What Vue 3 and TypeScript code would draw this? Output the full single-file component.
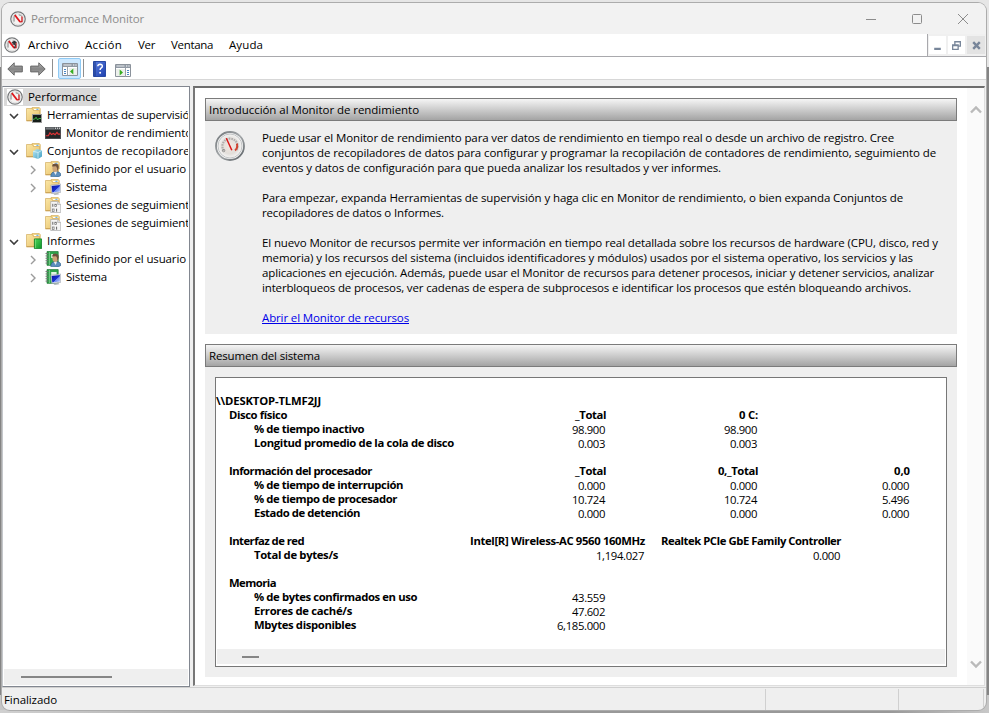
<script setup lang="ts">
interface TreeNode { label: string; width: number; level: number; icon: string; chevron?: 'open' | 'closed'; selected?: boolean }
interface Cell { text: string; width: number; bold?: boolean }
interface Row { label?: string; width?: number; indent?: number; cells?: Cell[]; wide?: boolean }
interface Line { text: string; width: number }

const applyFit = (el: HTMLElement, width: number) => {
  el.style.letterSpacing = '0px'
  const natural = el.getBoundingClientRect().width
  const count = (el.textContent ?? '').trim().length
  if (count > 0) el.style.letterSpacing = `${(width - natural) / count}px`
}
const vFit = {
  mounted: (el: HTMLElement, binding: { value: number }) => applyFit(el, binding.value),
}

const menu: Line[] = [
  { text: 'Archivo', width: 41 },
  { text: 'Acción', width: 37 },
  { text: 'Ver', width: 17 },
  { text: 'Ventana', width: 42 },
  { text: 'Ayuda', width: 34 },
]

const nodes: TreeNode[] = [
  { label: 'Performance', width: 69, level: 0, icon: 'gauge', selected: true },
  { label: 'Herramientas de supervisión', width: 149, level: 1, icon: 'tools', chevron: 'open' },
  { label: 'Monitor de rendimiento', width: 126, level: 2, icon: 'monitor' },
  { label: 'Conjuntos de recopiladores de datos', width: 198, level: 1, icon: 'sets', chevron: 'open' },
  { label: 'Definido por el usuario', width: 120, level: 2, icon: 'user-folder', chevron: 'closed' },
  { label: 'Sistema', width: 41, level: 2, icon: 'system-folder', chevron: 'closed' },
  { label: 'Sesiones de seguimiento', width: 130, level: 2, icon: 'trace' },
  { label: 'Sesiones de seguimiento', width: 130, level: 2, icon: 'trace' },
  { label: 'Informes', width: 48, level: 1, icon: 'reports', chevron: 'open' },
  { label: 'Definido por el usuario', width: 120, level: 2, icon: 'user-book', chevron: 'closed' },
  { label: 'Sistema', width: 41, level: 2, icon: 'system-book', chevron: 'closed' },
]

const paragraphs: Line[][] = [
  [
    { text: 'Puede usar el Monitor de rendimiento para ver datos de rendimiento en tiempo real o desde un archivo de registro. Cree', width: 632 },
    { text: 'conjuntos de recopiladores de datos para configurar y programar la recopilación de contadores de rendimiento, seguimiento de', width: 674 },
    { text: 'eventos y datos de configuración para que pueda analizar los resultados y ver informes.', width: 459 },
  ],
  [
    { text: 'Para empezar, expanda Herramientas de supervisión y haga clic en Monitor de rendimiento, o bien expanda Conjuntos de', width: 641 },
    { text: 'recopiladores de datos o Informes.', width: 182 },
  ],
  [
    { text: 'El nuevo Monitor de recursos permite ver información en tiempo real detallada sobre los recursos de hardware (CPU, disco, red y', width: 676 },
    { text: 'memoria) y los recursos del sistema (incluidos identificadores y módulos) usados por el sistema operativo, los servicios y las', width: 651 },
    { text: 'aplicaciones en ejecución. Además, puede usar el Monitor de recursos para detener procesos, iniciar y detener servicios, analizar', width: 672 },
    { text: 'interbloqueos de procesos, ver cadenas de espera de subprocesos e identificar los procesos que estén bloqueando archivos.', width: 649 },
  ],
]

const v = (text: string, width: number): Cell => ({ text, width })
const h = (text: string, width: number): Cell => ({ text, width, bold: true })

const rows: Row[] = [
  { label: '\\\\DESKTOP-TLMF2JJ', width: 105, indent: 0 },
  { label: 'Disco físico', width: 58, indent: 1, cells: [h('_Total', 31), h('0 C:', 19)] },
  { label: '% de tiempo inactivo', width: 110, indent: 2, cells: [v('98.900', 33), v('98.900', 33)] },
  { label: 'Longitud promedio de la cola de disco', width: 200, indent: 2, cells: [v('0.003', 27), v('0.003', 27)] },
  {},
  { label: 'Información del procesador', width: 143, indent: 1, cells: [h('_Total', 31), h('0,_Total', 40), h('0,0', 16)] },
  { label: '% de tiempo de interrupción', width: 149, indent: 2, cells: [v('0.000', 27), v('0.000', 27), v('0.000', 27)] },
  { label: '% de tiempo de procesador', width: 143, indent: 2, cells: [v('10.724', 33), v('10.724', 33), v('5.496', 27)] },
  { label: 'Estado de detención', width: 106, indent: 2, cells: [v('0.000', 27), v('0.000', 27), v('0.000', 27)] },
  {},
  { label: 'Interfaz de red', width: 75, indent: 1, wide: true, cells: [h('Intel[R] Wireless-AC 9560 160MHz', 175), h('Realtek PCIe GbE Family Controller', 180)] },
  { label: 'Total de bytes/s', width: 84, indent: 2, wide: true, cells: [v('1,194.027', 48), v('0.000', 27)] },
  {},
  { label: 'Memoria', width: 47, indent: 1 },
  { label: '% de bytes confirmados en uso', width: 163, indent: 2, cells: [v('43.559', 33)] },
  { label: 'Errores de caché/s', width: 98, indent: 2, cells: [v('47.602', 33)] },
  { label: 'Mbytes disponibles', width: 102, indent: 2, cells: [v('6,185.000', 48)] },
]
</script>

<template>
  <div class="desktop">
    <svg class="defs" width="0" height="0" aria-hidden="true">
      <defs>
        <linearGradient id="g-folder" x1="0" y1="0" x2="1" y2="1">
          <stop offset="0" stop-color="#fbe7a6" /><stop offset="1" stop-color="#e7c069" />
        </linearGradient>
        <linearGradient id="g-arrow" x1="0" y1="0" x2="0" y2="1">
          <stop offset="0" stop-color="#b4b4b4" /><stop offset=".5" stop-color="#858585" /><stop offset="1" stop-color="#a8a8a8" />
        </linearGradient>
        <linearGradient id="g-help" x1="0" y1="0" x2="1" y2="1">
          <stop offset="0" stop-color="#5b7fe0" /><stop offset="1" stop-color="#1d3fae" />
        </linearGradient>
        <linearGradient id="g-rim" x1="0" y1="0" x2="1" y2="1">
          <stop offset="0" stop-color="#6f7478" /><stop offset=".5" stop-color="#a6aaac" /><stop offset="1" stop-color="#565c61" />
        </linearGradient>
        <radialGradient id="g-dial">
          <stop offset="0" stop-color="#f3e8e0" /><stop offset=".65" stop-color="#e2deda" /><stop offset="1" stop-color="#f6f6f6" />
        </radialGradient>
        <linearGradient id="g-cube" x1="0" y1="0" x2="1" y2="1">
          <stop offset="0" stop-color="#b9e6f2" /><stop offset="1" stop-color="#3f9fc4" />
        </linearGradient>
        <linearGradient id="g-green" x1="0" y1="0" x2="1" y2="1">
          <stop offset="0" stop-color="#53d75e" /><stop offset="1" stop-color="#0b9427" />
        </linearGradient>
        <linearGradient id="g-screen" x1="0" y1="0" x2="1" y2="1">
          <stop offset="0" stop-color="#0712a0" /><stop offset=".55" stop-color="#1a30d0" /><stop offset=".6" stop-color="#6f8df0" /><stop offset="1" stop-color="#b7c8fa" />
        </linearGradient>
      </defs>
      <symbol id="gauge" viewBox="0 0 16 16">
        <circle cx="8" cy="8" r="7.2" fill="#fff" stroke="#77797b" stroke-width="1.3" />
        <circle cx="8" cy="8" r="5.9" fill="#f4f3f2" stroke="#d0d0d0" stroke-width=".6" />
        <path d="M4 10.6V5.8q.6-1.4 2.1-2.1M8.7 3.8q2.4.2 3.2 1.6" fill="none" stroke="#6f6f6f" stroke-width=".9" />
        <path d="M4.8 4 10.2 11" stroke="#e0161b" stroke-width="1.8" />
        <path d="M12 5.5v5l-1.8.7" fill="none" stroke="#cf2226" stroke-width="1.4" />
      </symbol>
      <symbol id="console" viewBox="0 0 16 16">
        <use href="#gauge" />
        <path d="m7.4 5.2 3.2-1.5 2.2 1.9-2.5 2Z" fill="#303236" />
        <path d="m8.3 6.8 3.2 1-1 3.3" fill="none" stroke="#33363a" stroke-width="1.2" />
      </symbol>
      <symbol id="gauge-large" viewBox="0 0 30 30">
        <circle cx="15" cy="15" r="14" fill="#f5f5f5" stroke="url(#g-rim)" stroke-width="1.8" />
        <circle cx="15" cy="15" r="12" fill="url(#g-dial)" stroke="#c1c4c5" />
        <path d="M8.8 19.6a7.6 7.6 0 1 1 12.4 0" fill="none" stroke="#b1aeac" stroke-width="2.2" stroke-dasharray="1.6 .9" />
        <path d="M21.9 12.6q1.2 4-1.8 6.8" fill="none" stroke="#d0432f" stroke-width="2" />
        <path d="M10.6 7.2 12 7l5.5 11.9-1.4.7Z" fill="#db1717" />
        <circle cx="8.6" cy="19.6" r="1.2" fill="none" stroke="#777" stroke-width=".7" />
      </symbol>
      <symbol id="folder" viewBox="0 0 16 16">
        <path d="M6 .5h7.3l1 1.2V8H6Z" fill="#f6d989" stroke="#d6b062" stroke-width=".7" />
        <path d="M8 2h5.2v1.4H8Z" fill="#fff" /><path d="M10.4 1.8h2.1v1h-2.1Z" fill="#4d9de0" />
        <path d="M.5 1.5h5.8l1.2 2H13.5v10.5H.5Z" fill="url(#g-folder)" stroke="#d3ad60" stroke-width=".7" />
        <path d="M.9 13.5h12.2" stroke="#c79d50" stroke-width=".8" />
      </symbol>
      <symbol id="tools" viewBox="0 0 16 16">
        <use href="#folder" />
        <path d="M6 7h10v9H6Z" fill="#9a9a9a" /><path d="M7 8h8v7H7Z" fill="#141c18" />
        <path d="m7 12.4 1.8-.4 1.3-1.8 1.5 2.8 1.2-1.5H15" fill="none" stroke="#43c64b" stroke-width=".9" />
      </symbol>
      <symbol id="monitor" viewBox="0 0 16 16">
        <path d="M0 2h16v12H0Z" fill="#55595c" /><path d="M.8 5h14.4v8.3H.8Z" fill="#242628" />
        <path d="M1 3.2h8" stroke="#85898c" /><path d="M10 3.2h5" stroke="#fff" stroke-dasharray="1 1" />
        <path d="M.8 10.8h2.5L5 7.7l1.4 1.8 2-1 1.7 1.2L12 7.4l1.2 1.7h2" fill="none" stroke="#e33336" stroke-width="1.1" />
      </symbol>
      <symbol id="sets" viewBox="0 0 16 16">
        <use href="#folder" />
        <path d="m7 8.2 3.9-2.1L16 7.3v6.1L12 16l-5-1.8Z" fill="url(#g-cube)" />
        <path d="m7 8.2 5 1.3v6.5M12 9.5l4-2.2" fill="none" stroke="#dff6fb" stroke-width=".7" />
      </symbol>
      <symbol id="person" viewBox="0 0 16 16">
        <path d="M5.8 15.6q-.1-5 4.8-5 5.5 0 5.3 3.8l-2.6 1.5Z" fill="#5c8fbd" stroke="#285b86" stroke-width=".6" />
        <ellipse cx="10.3" cy="7.2" rx="2.9" ry="3.8" fill="#cda376" />
        <path d="M7.1 5.4q.2-3 3.5-2.8 3.7.3 3 4.5l-1.3 3.4q.2-4-1.2-5.2Z" fill="#6b503c" />
        <path d="m8.8 11 1.9 3.1 1.3-3.4" fill="#eee" />
      </symbol>
      <symbol id="computer" viewBox="0 0 16 16">
        <path d="M5.8 6.2 15.7 5v8.4l-9 1.1Z" fill="#e5e8ed" stroke="#8b93a2" stroke-width=".5" />
        <path d="m6.6 6.9 8.3-1v6.6l-7.6 1Z" fill="url(#g-screen)" />
        <path d="m8.2 14.8 4.3-.7 2 1.1-4.8.8Z" fill="#aeb5bd" />
      </symbol>
      <symbol id="user-folder" viewBox="0 0 16 16"><use href="#folder" /><use href="#person" /></symbol>
      <symbol id="system-folder" viewBox="0 0 16 16"><use href="#folder" /><use href="#computer" /></symbol>
      <symbol id="trace" viewBox="0 0 16 16">
        <use href="#folder" />
        <path d="M5.7 4.5h7l3 2.9v8.1h-10Z" fill="#f5f5f5" stroke="#a9a9a9" stroke-width=".7" />
        <path d="M12.6 4.5v3h3" fill="#ddd" stroke="#aaa" stroke-width=".6" />
        <path d="M7.8 6.8v3M11.6 11.7v3" stroke="#656565" />
        <rect x="9.8" y="7.2" width="1.8" height="2.4" fill="none" stroke="#707070" stroke-width=".7" />
        <rect x="7.3" y="12" width="1.8" height="2.4" fill="none" stroke="#707070" stroke-width=".7" />
      </symbol>
      <symbol id="reports" viewBox="0 0 16 16">
        <use href="#folder" />
        <path d="M8.4 5.9h7.2v9.7H8.4Z" fill="url(#g-green)" stroke="#087b22" stroke-width=".8" />
        <path d="M9.5 6.4v8.8" stroke="#83e78a" stroke-width=".6" />
      </symbol>
      <symbol id="book" viewBox="0 0 16 16">
        <path d="M2 .6h11.2v13.7H2Z" fill="#2fa64c" stroke="#17722d" stroke-width=".7" />
        <path d="M4.5 1v13" stroke="#7ad18b" stroke-width=".8" />
        <path d="M6.2 3h5.4v4H6.2Z" fill="#e2f4e2" />
        <path d="M.5 2.5h3M.5 4.9h3M.5 7.3h3M.5 9.7h3M.5 12.1h3" stroke="#777" stroke-width=".9" />
      </symbol>
      <symbol id="user-book" viewBox="0 0 16 16"><use href="#book" /><use href="#person" /></symbol>
      <symbol id="system-book" viewBox="0 0 16 16"><use href="#book" /><use href="#computer" /></symbol>
      <symbol id="arrow" viewBox="0 0 16 14">
        <path d="M.8 7 7.2.8v3.3h8.1v5.8H7.2v3.3Z" fill="url(#g-arrow)" stroke="#686868" stroke-width="1" stroke-linejoin="round" />
      </symbol>
      <symbol id="pane-frame" viewBox="0 0 16 13">
        <path d="M.5.5h15v12H.5Z" fill="#fff" stroke="#8b929b" />
        <path d="M1 1h14v3H1Z" fill="#919aa5" /><path d="M1.5 2h8" stroke="#fff" stroke-width=".8" /><path d="M11 2h4" stroke="#fff" stroke-dasharray="1 .7" />
      </symbol>
    </svg>

    <div class="window">
      <header class="titlebar">
        <svg class="icon title-icon"><use href="#gauge" /></svg>
        <span v-fit="113" class="title">Performance Monitor</span>
        <div class="caption-buttons">
          <svg viewBox="0 0 12 12"><path d="M1 6.5h10" /></svg>
          <svg viewBox="0 0 12 12"><rect x="1.5" y="1.5" width="9" height="9" rx="1" /></svg>
          <svg viewBox="0 0 12 12"><path d="m1 1 10 10M11 1 1 11" /></svg>
        </div>
      </header>

      <nav class="menubar">
        <div class="menu-items">
          <svg class="icon"><use href="#console" /></svg>
          <span v-for="item in menu" :key="item.text" v-fit="item.width" class="menu-item">{{ item.text }}</span>
        </div>
        <div class="child-buttons">
          <span><svg viewBox="0 0 10 10"><path d="M2 8h6" stroke-width="2" /></svg></span>
          <span><svg viewBox="0 0 10 10"><path d="M3.5 4V1.5h5v4H7M3 1.7h6M1.5 4.5h5v4h-5ZM1 5h6" stroke-width="1.2" /></svg></span>
          <span class="child-close"><svg viewBox="0 0 10 10"><path d="m2 2 6 6M8 2 2 8" stroke-width="2.2" /></svg></span>
        </div>
      </nav>

      <div class="toolbar">
        <svg class="arrow"><use href="#arrow" /></svg>
        <svg class="arrow forward"><use href="#arrow" /></svg>
        <i class="separator" />
        <span class="tool active">
          <svg width="16" height="13" viewBox="0 0 16 13">
            <use href="#pane-frame" width="16" height="13" />
            <path d="M5.5 4v8.5" stroke="#9ba2aa" /><path d="M2 6.5h2M2 8.5h2M2 10.5h2" stroke="#4a87c4" />
            <path d="M7 5h8v7H7Z" fill="#edf0ec" /><path d="M11.3 5.5v6L8 8.5Z" fill="#36ad20" />
          </svg>
        </span>
        <i class="separator second" />
        <svg class="help" viewBox="0 0 13 16">
          <path d="M.5.5h12v15H.5Z" fill="url(#g-help)" stroke="#2849a5" /><path d="M2 .7v14.6" stroke="#183581" />
          <path d="M4.8 5.2q.2-2 2.3-2 2.3.1 2.2 2 0 1.3-1.3 2-.9.6-.9 1.9" fill="none" stroke="#fff" stroke-width="1.5" />
          <circle cx="7.1" cy="11.8" r="1" fill="#fff" />
        </svg>
        <svg class="action-pane" width="16" height="13" viewBox="0 0 16 13">
          <use href="#pane-frame" width="16" height="13" />
          <path d="M10.5 4v8.5" stroke="#9ba2aa" /><path d="M12 6.5h2M12 8.5h2M12 10.5h2" stroke="#4a87c4" />
          <path d="M1 5h9v7H1Z" fill="#edf0ec" /><path d="M4.7 5.5v6L8 8.5Z" fill="#36ad20" />
        </svg>
      </div>

      <main class="workspace">
        <aside class="tree-pane">
          <div class="tree">
            <div v-for="(node, i) in nodes" :key="i" class="node" :class="[`level-${node.level}`, { selected: node.selected }]">
              <svg v-if="node.level > 0" class="chevron" :class="node.chevron" viewBox="0 0 10 10">
                <path v-if="node.chevron === 'open'" d="m1 3 4 4 4-4" />
                <path v-else-if="node.chevron === 'closed'" d="m3 1 4 4-4 4" />
              </svg>
              <svg class="icon"><use :href="`#${node.icon}`" /></svg>
              <span v-fit="node.width" class="node-label">{{ node.label }}</span>
            </div>
          </div>
          <div class="tree-scroll"><i /></div>
        </aside>

        <section class="content">
          <div class="scroll-body">
            <h2><span v-fit="210">Introducción al Monitor de rendimiento</span></h2>
            <article class="intro">
              <svg class="large-icon"><use href="#gauge-large" /></svg>
              <div class="copy">
                <p v-for="(para, i) in paragraphs" :key="i">
                  <template v-for="line in para" :key="line.text"><span v-fit="line.width" class="line">{{ line.text }}</span><br></template>
                </p>
                <a v-fit="147">Abrir el Monitor de recursos</a>
              </div>
            </article>

            <h2 class="summary-title"><span v-fit="111">Resumen del sistema</span></h2>
            <article class="summary">
              <div class="report">
                <div class="rows">
                  <div v-for="(row, i) in rows" :key="i" class="row" :class="{ wide: row.wide }">
                    <div class="row-label" :class="`indent-${row.indent ?? 0}`">
                      <b v-if="row.label" v-fit="row.width ?? 0">{{ row.label }}</b>
                    </div>
                    <div v-for="(cell, j) in row.cells" :key="j" class="cell" :class="{ heading: cell.bold }">
                      <span v-fit="cell.width">{{ cell.text }}</span>
                    </div>
                  </div>
                </div>
                <div class="report-scroll"><i /></div>
              </div>
            </article>
          </div>
          <div class="scrollbar">
            <svg viewBox="0 0 12 10"><path d="m1 7.5 5-5 5 5" /></svg>
            <svg viewBox="0 0 12 10"><path d="m1 2.5 5 5 5-5" /></svg>
          </div>
        </section>
      </main>

      <footer class="status">
        <div class="status-main"><span v-fit="53">Finalizado</span></div>
        <div class="status-mid" />
        <div class="status-end" />
      </footer>
    </div>
  </div>
</template>

<style>
body { margin: 0; overflow: hidden; }
</style>

<style scoped>
* { box-sizing: border-box; }
.desktop {
  width: 989px; height: 713px; padding: 3px 3px 3px 2px; overflow: hidden;
  background: linear-gradient(90deg, #d0d0d0, #999 35%, #999 90%, #c8c8c8) bottom / 100% 3px no-repeat,
    linear-gradient(#e6e6e6 0 67px, #848484 67px 695px, #c6c6c6 695px);
  font: 11.5px/15px "Open Sans", "Noto Sans", sans-serif; color: #000;
}
.defs { position: absolute; }
.window {
  width: 984px; height: 707px; display: flex; flex-direction: column; overflow: hidden;
  border-radius: 8px; background: #efefef; box-shadow: 0 0 0 1px #acacac;
}
span, b, a { display: inline-block; white-space: nowrap; }
.icon { width: 16px; height: 16px; flex: none; display: block; }
.titlebar { height: 31px; flex: none; display: flex; align-items: center; padding-left: 8px; background: #f2f2f2; color: #8d8d8d; }
.title { margin-left: 5px; }
.caption-buttons { margin-left: auto; display: flex; gap: 34px; padding-right: 17px; }
.caption-buttons svg { width: 12px; height: 12px; fill: none; stroke: #8c8c8c; stroke-width: 1; }
.menubar { height: 23px; flex: none; display: flex; background: #fff; border-bottom: 1px solid #a9a9ad; }
.menu-items { flex: 1; display: flex; align-items: center; gap: 16px; padding-left: 2px; border-right: 1px solid #a9a9ad; }
.menu-items .icon { margin-right: -8px; }
.menu-item { padding-bottom: 1px; }
.child-buttons { width: 58px; display: flex; gap: 2px; padding: 2px 0 2px 1px; background: #f0f0f0; }
.child-buttons span { width: 17px; display: grid; place-items: center; background: #fff; }
.child-buttons .child-close { width: 18px; background: #e3e3e3; }
.child-buttons svg { width: 11px; height: 11px; fill: none; stroke: #78869a; }
.toolbar { height: 23px; flex: none; display: flex; align-items: center; padding-left: 5px; background: #fff; border-bottom: 1px solid #d7d7d7; }
.arrow { width: 16px; height: 14px; margin: 2px 7px 0 0; }
.forward { transform: scaleX(-1); margin-right: 6px; }
.separator { width: 1px; height: 18px; background: #8f8f8f; margin-right: 5px; }
.tool { width: 23px; height: 21px; display: grid; place-items: center; border: 1px solid #8fcaf4; border-radius: 2px; background: #cce8ff; margin-right: 2px; }
.tool svg { display: block; margin-top: 2px; }
.separator.second { margin-right: 9px; }
.help { width: 13px; height: 16px; margin-top: 1px; }
.action-pane { margin: 4px 0 0 9px; }
.workspace { height: 607px; flex: none; display: flex; padding: 6px 0 0; }
.tree-pane { width: 188px; height: 601px; display: flex; flex-direction: column; overflow: hidden; border: 1px solid #828790; border-left-color: #c4c7cb; background: #fff; padding: 1px; }
.tree { flex: 1; overflow: hidden; }
.node { height: 18px; display: flex; align-items: center; white-space: nowrap; }
.level-0 { padding-left: 3px; }
.level-1 { padding-left: 5px; }
.level-2 { padding-left: 24px; }
.selected { width: 96px; background: #d9d9d9; }
.node .icon { margin-right: 5px; }
.node-label { padding-bottom: 2px; }
.level-0 .icon { background: #fff; }
.chevron { width: 10px; height: 10px; margin-right: 7px; margin-bottom: -2px; flex: none; fill: none; stroke: #3d3d3d; stroke-width: 1.6; }
.chevron.closed { stroke: #9b9b9b; stroke-width: 1.4; }
.tree-scroll { height: 16px; background: #efefef; padding: 7px 0 0 17px; }
.tree-scroll i { display: block; width: 91px; height: 2px; background: #868686; }
.content { width: 792px; height: 600px; margin-left: 3px; display: flex; background: #fff; border: 1px solid #dedede; border-top: 2px solid #6d6d6d; border-left: 2px solid #777; }
.scroll-body { width: 772px; flex: none; padding: 10px 10px 0; }
h2 { width: 752px; height: 23px; margin: 0; padding: 3px 3px; border: 1px solid #7b7b7b; background: linear-gradient(#f5f5f5, #a4a4a4); font: inherit; }
.intro { height: 213px; width: 752px; display: flex; background: #efefef; }
.large-icon { width: 30px; height: 30px; margin: 10px 17px 0 10px; flex: none; }
.copy { padding-top: 9px; }
p { margin: 0 0 15px; }
.line { height: 15px; vertical-align: top; }
a { color: #0000e8; text-decoration: underline; text-underline-offset: 1px; }
.summary-title { margin-top: 10px; }
.summary { height: 310px; width: 752px; padding: 10px; background: #efefef; }
.report { width: 732px; height: 290px; display: flex; flex-direction: column; border: 1px solid #777; background: #fff; padding: 0 1px 2px; }
.rows { flex: 1; padding-top: 16px; font-size: 11.3px; line-height: 14px; }
.row { height: 14px; display: flex; }
.row-label { width: 237px; flex: none; }
.indent-0 b { margin-left: -1px; }
.indent-1 { padding-left: 12px; }
.indent-2 { padding-left: 37px; }
b, .heading { font-weight: 700; }
.cell { width: 152px; flex: none; display: flex; justify-content: flex-end; padding: 1px 1px 0 0; }
.wide .cell { width: 196px; }
.wide .row-label + .cell { width: 191px; }
.cell.heading { padding: 0; }
.report-scroll { height: 15px; background: #efefef; padding: 7px 0 0 25px; }
.report-scroll i { display: block; width: 17px; height: 2px; background: #868686; }
.scrollbar { width: 17px; flex: none; display: flex; flex-direction: column; justify-content: space-between; align-items: center; padding: 17px 0 16px; background: #fafafa; }
.scrollbar svg { width: 12px; height: 10px; fill: none; stroke: #bababa; stroke-width: 2.4; }
.status { flex: 1; display: flex; border-top: 1px solid #d0d0d0; padding: 1px 2px 1px 0; }
.status > div { border-right: 1px solid #d0d0d0; }
.status-main { width: 764px; padding: 3px 2px; }
.status-mid { width: 133px; }
.status-end { width: 85px; }
</style>
